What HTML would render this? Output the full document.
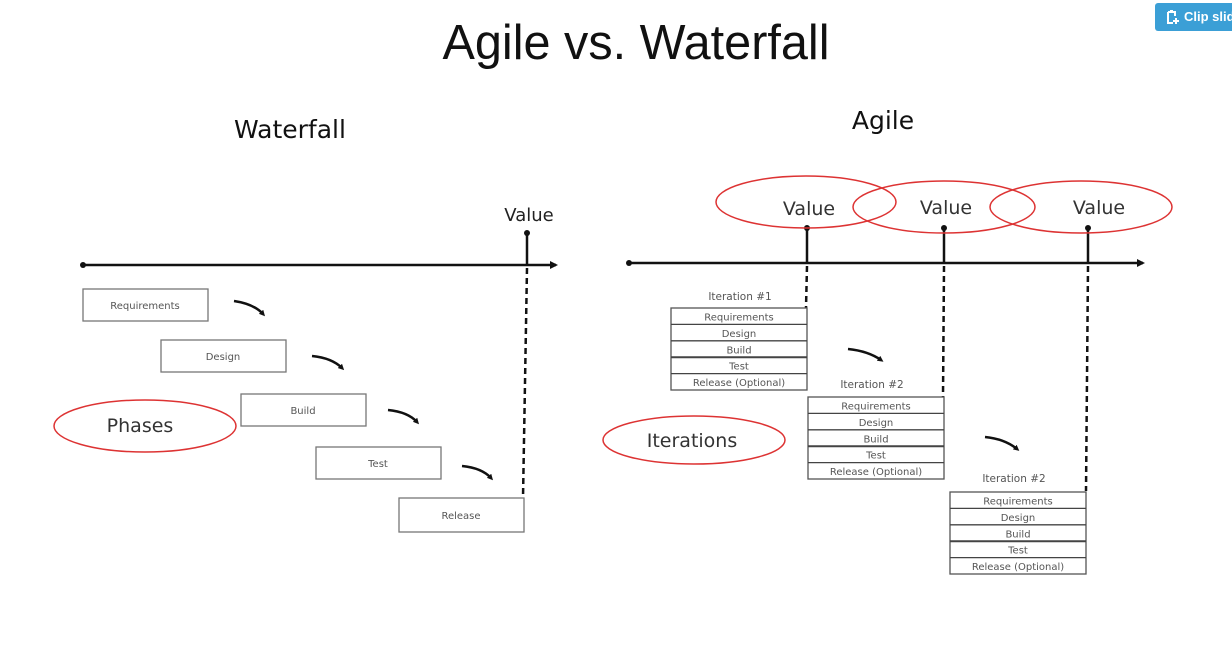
<!DOCTYPE html>
<html><head><meta charset="utf-8"><style>
html,body{margin:0;padding:0;background:#fff;width:1232px;height:662px;overflow:hidden}
svg{display:block}
text{font-family:"DejaVu Sans","Liberation Sans",sans-serif}
.btn{position:absolute;left:1155px;top:3px;width:90px;height:28px;background:#3b9fd6;border-radius:3px;color:#fff;font:bold 13px "Liberation Sans",sans-serif;line-height:28px;box-sizing:border-box;padding-left:29px;white-space:nowrap}
</style></head><body>
<svg width="1232" height="662" viewBox="0 0 1232 662">
<defs>
<marker id="ah" markerWidth="8" markerHeight="8" refX="6" refY="4" orient="auto" markerUnits="userSpaceOnUse"><path d="M0,0 L8,4 L0,8 z" fill="#111"/></marker>
<marker id="ch" markerWidth="6" markerHeight="6" refX="3" refY="3" orient="auto" markerUnits="userSpaceOnUse"><path d="M0,0 L6,3 L0,6 z" fill="#111"/></marker>
</defs>
<text x="636" y="59" font-size="49" text-anchor="middle" fill="#111" textLength="387" lengthAdjust="spacingAndGlyphs" style="font-family:'Liberation Sans',sans-serif">Agile vs. Waterfall</text>
<text x="290" y="138" font-size="25" text-anchor="middle" fill="#111">Waterfall</text>
<text x="883" y="129" font-size="25" text-anchor="middle" fill="#111">Agile</text>

<line x1="82" y1="265" x2="556" y2="265" stroke="#111" stroke-width="2.5" marker-end="url(#ah)"/>
<circle cx="83" cy="265" r="3" fill="#111"/>
<line x1="527" y1="233" x2="527" y2="265" stroke="#111" stroke-width="2.5"/>
<circle cx="527" cy="233" r="3" fill="#111"/>
<text x="529" y="221" font-size="18" text-anchor="middle" fill="#222">Value</text>
<line x1="527" y1="268" x2="523" y2="498" stroke="#111" stroke-width="2.5" stroke-dasharray="6,4"/>
<g fill="#fff" stroke="#777" stroke-width="1.3">
<rect x="83" y="289" width="125" height="32"/><rect x="161" y="340" width="125" height="32"/>
<rect x="241" y="394" width="125" height="32"/><rect x="316" y="447" width="125" height="32"/>
<rect x="399" y="498" width="125" height="34"/></g>
<g font-size="10" fill="#555" text-anchor="middle">
<text x="145" y="309">Requirements</text><text x="223" y="360">Design</text>
<text x="303" y="414">Build</text><text x="378" y="467">Test</text><text x="461" y="519">Release</text></g>
<g fill="none" stroke="#111" stroke-width="2.5">
<path d="M234,301 Q254,304 263,314" marker-end="url(#ch)"/>
<path d="M312,356 Q332,358 342,368" marker-end="url(#ch)"/>
<path d="M388,410 Q408,412 417,422" marker-end="url(#ch)"/>
<path d="M462,466 Q482,468 491,478" marker-end="url(#ch)"/>
<path d="M848,349 Q868,351 881,360" marker-end="url(#ch)"/>
<path d="M985,437 Q1005,439 1017,449" marker-end="url(#ch)"/>
</g>
<ellipse cx="145" cy="426" rx="91" ry="26" fill="none" stroke="#d33" stroke-width="1.5"/>
<text x="140" y="432" font-size="19" text-anchor="middle" fill="#333">Phases</text>

<line x1="628" y1="263" x2="1143" y2="263" stroke="#111" stroke-width="2.5" marker-end="url(#ah)"/>
<circle cx="629" cy="263" r="3" fill="#111"/>
<g stroke="#111" stroke-width="2.5">
<line x1="807" y1="228" x2="807" y2="263"/><line x1="944" y1="228" x2="944" y2="263"/><line x1="1088" y1="228" x2="1088" y2="263"/>
</g>
<g fill="#111"><circle cx="807" cy="228" r="3"/><circle cx="944" cy="228" r="3"/><circle cx="1088" cy="228" r="3"/></g>
<g stroke="#111" stroke-width="2.5" stroke-dasharray="6,4">
<line x1="807" y1="266" x2="806" y2="308"/><line x1="944" y1="266" x2="943" y2="397"/><line x1="1088" y1="266" x2="1086" y2="491"/>
</g>
<g fill="none" stroke="#d33" stroke-width="1.5">
<ellipse cx="806" cy="202" rx="90" ry="26"/><ellipse cx="944" cy="207" rx="91" ry="26"/><ellipse cx="1081" cy="207" rx="91" ry="26"/>
</g>
<g font-size="19" text-anchor="middle" fill="#333">
<text x="809" y="215">Value</text><text x="946" y="214">Value</text><text x="1099" y="214">Value</text>
</g>
<ellipse cx="694" cy="440" rx="91" ry="24" fill="none" stroke="#d33" stroke-width="1.5"/>
<text x="692" y="447" font-size="19" text-anchor="middle" fill="#333">Iterations</text>

<g font-size="10.5" fill="#555" text-anchor="middle">
<text x="740" y="300">Iteration #1</text><text x="872" y="388">Iteration #2</text><text x="1014" y="482">Iteration #2</text>
</g>
<g id="t1" transform="translate(671,308)">
<rect x="0" y="0" width="136" height="82" fill="#fff" stroke="#555" stroke-width="1.3"/>
<g stroke="#444" stroke-width="1.3"><line x1="0" y1="16.4" x2="136" y2="16.4"/><line x1="0" y1="32.8" x2="136" y2="32.8"/><line x1="0" y1="49.2" x2="136" y2="49.2" stroke-width="2"/><line x1="0" y1="65.6" x2="136" y2="65.6"/></g>
<g font-size="10" fill="#555" text-anchor="middle">
<text x="68" y="12.5">Requirements</text><text x="68" y="29">Design</text><text x="68" y="45.5">Build</text><text x="68" y="61.5">Test</text><text x="68" y="78">Release (Optional)</text></g>
</g>
<use href="#t1" transform="translate(137,89)"/>
<use href="#t1" transform="translate(279,184)"/>
</svg>
<div class="btn"><svg style="position:absolute;left:11px;top:7px" width="14" height="15" viewBox="0 0 14 15"><path d="M2,2 H9 V6 M2,2 V13 H7" fill="none" stroke="#fff" stroke-width="2"/><path d="M10,8 V14 M7,11 H13" stroke="#fff" stroke-width="2"/><rect x="4" y="0" width="3" height="3" fill="#fff"/></svg>Clip slide</div>
</body></html>
